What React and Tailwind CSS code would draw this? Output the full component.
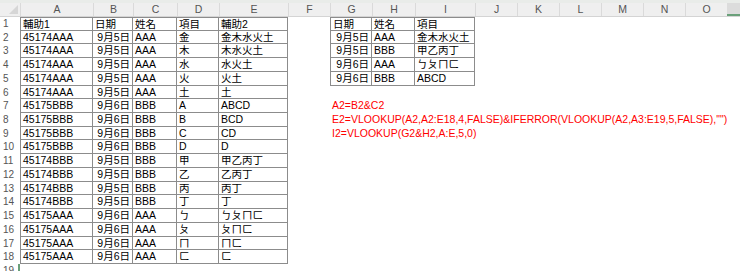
const cols = ["A", "B", "C", "D", "E", "F", "G", "H", "I", "J", "K", "L", "M", "N", "O"];

const left = [
  ["輔助1", "日期", "姓名", "項目", "輔助2"],
  ["45174AAA", "9月5日", "AAA", "金", "金木水火土"],
  ["45174AAA", "9月5日", "AAA", "木", "木水火土"],
  ["45174AAA", "9月5日", "AAA", "水", "水火土"],
  ["45174AAA", "9月5日", "AAA", "火", "火土"],
  ["45174AAA", "9月5日", "AAA", "土", "土"],
  ["45175BBB", "9月6日", "BBB", "A", "ABCD"],
  ["45175BBB", "9月6日", "BBB", "B", "BCD"],
  ["45175BBB", "9月6日", "BBB", "C", "CD"],
  ["45175BBB", "9月6日", "BBB", "D", "D"],
  ["45174BBB", "9月5日", "BBB", "甲", "甲乙丙丁"],
  ["45174BBB", "9月5日", "BBB", "乙", "乙丙丁"],
  ["45174BBB", "9月5日", "BBB", "丙", "丙丁"],
  ["45174BBB", "9月5日", "BBB", "丁", "丁"],
  ["45175AAA", "9月6日", "AAA", "ㄅ", "ㄅㄆㄇㄈ"],
  ["45175AAA", "9月6日", "AAA", "ㄆ", "ㄆㄇㄈ"],
  ["45175AAA", "9月6日", "AAA", "ㄇ", "ㄇㄈ"],
  ["45175AAA", "9月6日", "AAA", "ㄈ", "ㄈ"],
];

const right = [
  ["日期", "姓名", "項目"],
  ["9月5日", "AAA", "金木水火土"],
  ["9月5日", "BBB", "甲乙丙丁"],
  ["9月6日", "AAA", "ㄅㄆㄇㄈ"],
  ["9月6日", "BBB", "ABCD"],
];

const notes = {
  7: "A2=B2&C2",
  8: 'E2=VLOOKUP(A2,A2:E18,4,FALSE)&IFERROR(VLOOKUP(A2,A3:E19,5,FALSE),"")',
  9: "I2=VLOOKUP(G2&H2,A:E,5,0)",
};

const gridCols =
  "grid grid-cols-[20px_73px_40px_44px_42px_69px_42px_42px_43px_60px_42px_42px_42px_42px_42px_42px_13px]";

const cellCls = (isDate, first, top) =>
  `border-r border-b border-[#8c8c8c] px-[2px] whitespace-nowrap overflow-hidden ${
    isDate ? "text-right" : "text-left"
  } ${first ? "border-l" : ""} ${top ? "border-t" : ""}`;

export default function App() {
  const rows = Array.from({ length: 19 }, (_, i) => i + 1);

  return (
    <div
      className="w-[740px] h-[271px] overflow-hidden bg-white text-[10.5px] leading-[13px] text-black"
      style={{ fontFamily: '"Liberation Sans", "Noto Sans CJK TC", sans-serif' }}
    >
      <div className="h-[3px] bg-[#e9ece9]" />
      <div className={`${gridCols} h-[14px] bg-[#efefef] border-b border-[#d4d4d4] text-[#555]`}>
        <div className="relative">
          <div className="absolute right-[2px] bottom-[2px] w-0 h-0 border-l-[9px] border-l-transparent border-b-[9px] border-b-[#d6d6d6]" />
        </div>
        {cols.map((c) => (
          <div key={c} className="border-l border-[#dadada] text-center leading-[13px]">
            {c}
          </div>
        ))}
        <div className="bg-[#dcdcdc] border-b-2 border-[#6aa07a]" />
      </div>

      {rows.map((r) => {
        const l = left[r - 1];
        const rt = right[r - 1];
        return (
          <div key={r} className={`${gridCols} h-[13.72px]`}>
            <div
              className={`pl-[3px] text-[#555] text-[10px] ${
                r === 19 ? "border-r-2 border-[#6aa07a]" : ""
              }`}
            >
              {r}
            </div>
            {l ? (
              l.map((v, i) => (
                <div key={i} className={cellCls(i === 1 && r > 1, i === 0, r === 1)}>
                  {v}
                </div>
              ))
            ) : (
              <>
                <div />
                <div />
                <div />
                <div />
                <div />
              </>
            )}
            <div />
            {rt ? (
              rt.map((v, i) => (
                <div key={i} className={cellCls(i === 0 && r > 1, i === 0, r === 1)}>
                  {v}
                </div>
              ))
            ) : (
              <>
                <div className="pl-[2px] whitespace-nowrap text-[#ff0000]">
                  {notes[r] || ""}
                </div>
                <div />
                <div />
              </>
            )}
            <div />
            <div />
            <div />
            <div />
            <div />
            <div />
            <div />
          </div>
        );
      })}
    </div>
  );
}
